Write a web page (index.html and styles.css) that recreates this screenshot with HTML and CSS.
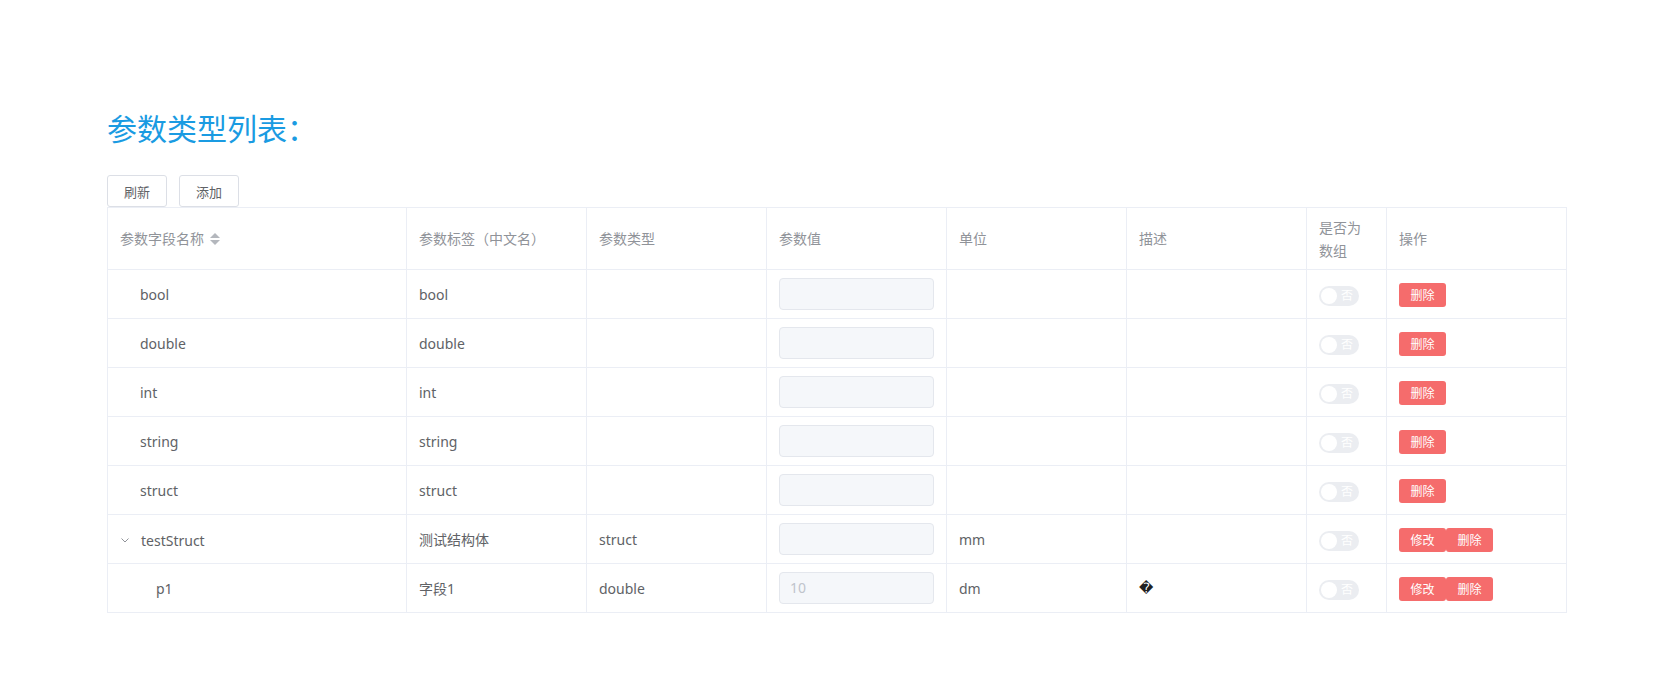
FILE: index.html
```html
<!DOCTYPE html>
<html lang="zh-CN">

<head>
    <meta charset="UTF-8">
    <title>参数类型列表</title>
    <link rel="stylesheet" href="styles.css">
</head>

<body>

    <div class="page">
        <h2 class="title">参数类型列表：</h2>

        <div class="toolbar">
            <button class="btn">刷新</button>
            <button class="btn">添加</button>
        </div>

        <table class="param-table">
            <colgroup>
                <col style="width: 299px">
                <col style="width: 180px">
                <col style="width: 180px">
                <col style="width: 180px">
                <col style="width: 180px">
                <col style="width: 180px">
                <col style="width: 80px">
                <col style="width: 180px">
            </colgroup>
            <thead>
                <tr>
                    <th>参数字段名称 <span class="sort"><i class="up"></i><i class="down"></i></span></th>
                    <th>参数标签（中文名）</th>
                    <th>参数类型</th>
                    <th>参数值</th>
                    <th>单位</th>
                    <th>描述</th>
                    <th>是否为<br>数组</th>
                    <th>操作</th>
                </tr>
            </thead>
            <tbody>
                <tr>
                    <td><span class="name leaf">bool</span></td>
                    <td>bool</td>
                    <td></td>
                    <td><div class="input"></div></td>
                    <td></td>
                    <td></td>
                    <td><span class="switch"><i class="knob"></i>否</span></td>
                    <td><button class="btn-danger">删除</button></td>
                </tr>
                <tr>
                    <td><span class="name leaf">double</span></td>
                    <td>double</td>
                    <td></td>
                    <td><div class="input"></div></td>
                    <td></td>
                    <td></td>
                    <td><span class="switch"><i class="knob"></i>否</span></td>
                    <td><button class="btn-danger">删除</button></td>
                </tr>
                <tr>
                    <td><span class="name leaf">int</span></td>
                    <td>int</td>
                    <td></td>
                    <td><div class="input"></div></td>
                    <td></td>
                    <td></td>
                    <td><span class="switch"><i class="knob"></i>否</span></td>
                    <td><button class="btn-danger">删除</button></td>
                </tr>
                <tr>
                    <td><span class="name leaf">string</span></td>
                    <td>string</td>
                    <td></td>
                    <td><div class="input"></div></td>
                    <td></td>
                    <td></td>
                    <td><span class="switch"><i class="knob"></i>否</span></td>
                    <td><button class="btn-danger">删除</button></td>
                </tr>
                <tr>
                    <td><span class="name leaf">struct</span></td>
                    <td>struct</td>
                    <td></td>
                    <td><div class="input"></div></td>
                    <td></td>
                    <td></td>
                    <td><span class="switch"><i class="knob"></i>否</span></td>
                    <td><button class="btn-danger">删除</button></td>
                </tr>
                <tr>
                    <td>
                        <span class="name">
                            <span class="expand">
                                <svg width="8" height="5" viewBox="0 0 8 5"><path d="M0.5 0.5 L4 4 L7.5 0.5" fill="none" stroke="#909399" stroke-width="1"/></svg>
                            </span>testStruct
                        </span>
                    </td>
                    <td>测试结构体</td>
                    <td>struct</td>
                    <td><div class="input"></div></td>
                    <td>mm</td>
                    <td></td>
                    <td><span class="switch"><i class="knob"></i>否</span></td>
                    <td><button class="btn-danger">修改</button><button class="btn-danger">删除</button></td>
                </tr>
                <tr>
                    <td><span class="name leaf child">p1</span></td>
                    <td>字段1</td>
                    <td>double</td>
                    <td><div class="input">10</div></td>
                    <td>dm</td>
                    <td><span class="bad-char">&#xFFFD;</span></td>
                    <td><span class="switch"><i class="knob"></i>否</span></td>
                    <td><button class="btn-danger">修改</button><button class="btn-danger">删除</button></td>
                </tr>
            </tbody>
        </table>
    </div>

</body>

</html>
```

FILE: styles.css
```css
body {
    margin: 0;
    font-family: "Noto Sans", "Noto Sans CJK SC", sans-serif;
    background-color: #fff;
    color: #606266;
}

.page {
    padding: 106px 0 0 107px;
}

.title {
    margin: 0;
    font-size: 30px;
    line-height: 45px;
    font-weight: normal;
    color: #1a9be2;
}

.toolbar {
    display: flex;
    gap: 12px;
    margin-top: 24px;
}

.btn {
    height: 32px;
    width: 60px;
    padding: 0;
    font-family: inherit;
    font-size: 13px;
    color: #606266;
    background-color: #fff;
    border: 1px solid #dcdfe6;
    border-radius: 3px;
    cursor: pointer;
}

.param-table {
    width: 1459px;
    border-collapse: collapse;
    table-layout: fixed;
    font-size: 14px;
    line-height: 23px;
}

.param-table th,
.param-table td {
    border: 1px solid #ebeef5;
    padding: 8px 12px;
    text-align: left;
    vertical-align: middle;
    box-sizing: border-box;
}

.param-table th {
    height: 62px;
    padding-top: 7px;
    padding-bottom: 7px;
    font-weight: normal;
    color: #909399;
}

.param-table td {
    height: 49px;
}

.sort {
    display: inline-flex;
    flex-direction: column;
    gap: 2px;
    vertical-align: middle;
    margin-left: 2px;
    margin-top: -2px;
}

.sort i {
    width: 0;
    height: 0;
    border-left: 5px solid transparent;
    border-right: 5px solid transparent;
}

.sort .up {
    border-bottom: 5px solid #b4b7bd;
}

.sort .down {
    border-top: 5px solid #b4b7bd;
}

.name {
    display: inline-flex;
    align-items: center;
}

.name.leaf {
    padding-left: 20px;
}

.name.leaf.child {
    padding-left: 36px;
}

.expand {
    width: 20px;
    display: inline-flex;
    align-items: center;
    padding-left: 1px;
    padding-top: 1px;
}

.input {
    height: 32px;
    box-sizing: border-box;
    border: 1px solid #e4e7ed;
    border-radius: 4px;
    background-color: #f5f7fa;
    padding: 0 10px;
    line-height: 30px;
    color: #c0c4cc;
}

.bad-char {
    font-family: "DejaVu Sans", sans-serif;
    color: #222;
}

.switch {
    display: inline-flex;
    align-items: center;
    gap: 4px;
    width: 40px;
    height: 20px;
    box-sizing: border-box;
    padding: 0 2px;
    border-radius: 10px;
    background-color: #ebedf1;
    font-size: 12px;
    color: #fff;
    vertical-align: middle;
}

.knob {
    width: 16px;
    height: 16px;
    border-radius: 50%;
    background-color: #fff;
}

.btn-danger {
    height: 24px;
    width: 47px;
    padding: 0;
    font-family: inherit;
    font-size: 12px;
    color: #fff;
    background-color: #f56c6c;
    border: none;
    border-radius: 3px;
    vertical-align: middle;
    cursor: pointer;
}
```
